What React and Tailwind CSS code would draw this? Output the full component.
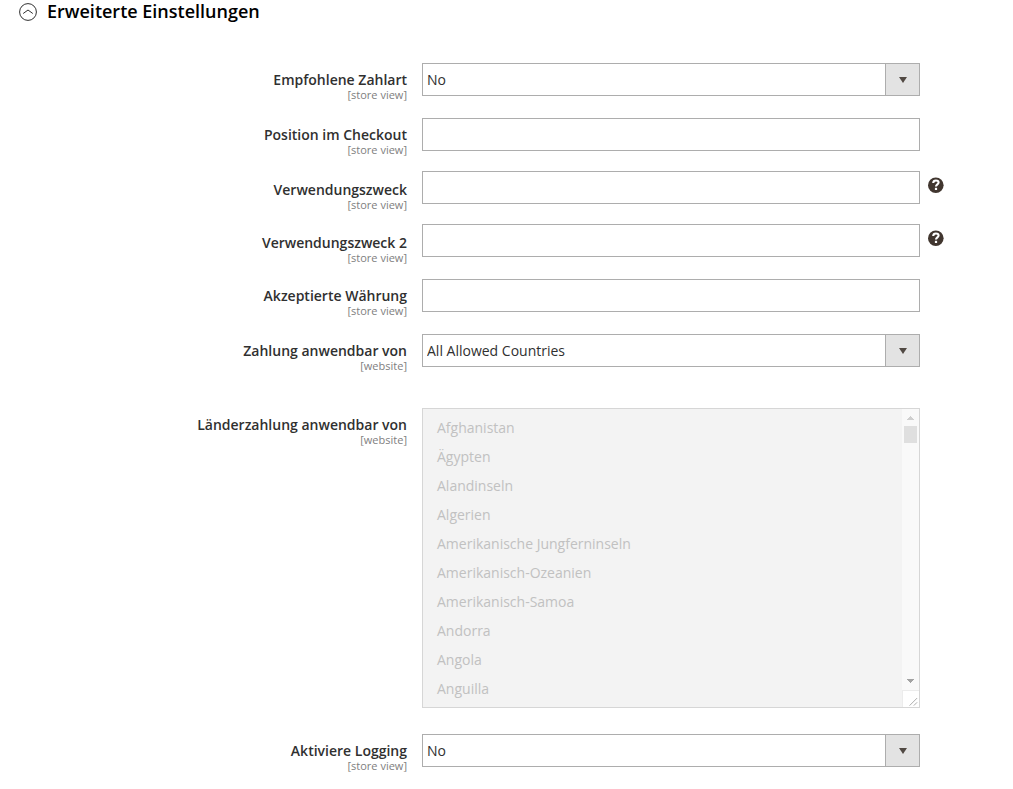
const countries = [
  'Afghanistan',
  'Ägypten',
  'Alandinseln',
  'Algerien',
  'Amerikanische Jungferninseln',
  'Amerikanisch-Ozeanien',
  'Amerikanisch-Samoa',
  'Andorra',
  'Angola',
  'Anguilla',
];

const Row = ({ id, label, scope, help, className = '', children }) => (
  <div className={`grid grid-cols-[422fr_498fr_93fr] items-start ${className}`}>
    <label htmlFor={id} className={`block pr-[15px] text-right ${help ? 'pt-2' : 'pt-1.5'}`}>
      <span className="block text-sm leading-[22px] font-semibold text-[#303030]">{label}</span>
      <span className="block text-[11px] leading-2 text-[#808080]">[{scope}]</span>
    </label>
    {children}
    {help && (
      <button type="button" aria-label="Hilfe" className="ml-2 mt-1.5 size-4">
        <svg viewBox="0 0 16 16" className="size-4">
          <circle cx="7.8" cy="8.2" r="7.8" fill="#41362f" />
          <path d="M5.2 6C5.3 4.2 6.4 3.5 7.9 3.5c1.6 0 2.7.8 2.7 2.1 0 1.8-2.6 1.9-2.6 4" fill="none" stroke="#fff" strokeWidth="2.1" />
          <rect x="6.9" y="10.8" width="2.2" height="2.2" fill="#fff" />
        </svg>
      </button>
    )}
  </div>
);

const TextField = ({ id }) => (
  <input id={id} type="text" className="h-[33px] w-full border border-[#adadad] bg-white px-2 text-sm text-[#303030]" />
);

const SelectField = ({ id, options }) => (
  <div className="relative">
    <select
      id={id}
      className="block h-[33px] w-full appearance-none border border-[#adadad] bg-white pl-1 pr-10 text-sm text-[#303030]"
    >
      {options.map((option) => (
        <option key={option}>{option}</option>
      ))}
    </select>
    <span className="pointer-events-none absolute inset-y-0 right-0 flex w-[35px] items-center justify-center border border-[#adadad] bg-[#e3e3e3]">
      <svg viewBox="0 0 8 6" className="h-1.5 w-2">
        <path d="M0 0h8L4 6z" fill="#514943" />
      </svg>
    </span>
  </div>
);

const CountryList = ({ id }) => (
  <div className="flex h-[300px] border border-[#d6d6d6] bg-[#f3f3f3]">
    <select
      id={id}
      multiple
      disabled
      className="h-full min-w-0 flex-1 appearance-none overflow-hidden bg-[#f3f3f3] pt-[5px] text-sm opacity-100"
    >
      {countries.map((country) => (
        <option key={country} className="h-[29px] px-3.5 py-1 leading-[21px] text-[#c1c1c1]">
          {country}
        </option>
      ))}
    </select>
    <div aria-hidden="true" className="flex w-[17px] flex-col items-center bg-[#f9f9f9]">
      <svg viewBox="0 0 7 4" className="mt-[7px] h-1 w-[7px]" shapeRendering="crispEdges">
        <path d="M0 4h7V3H6V2H5V1H4V0H3v1H2v1H1v1H0z" fill="#cfcfcf" />
      </svg>
      <div className="mt-1.5 h-[17px] w-[13px] bg-[#dfdfdf]" />
      <svg viewBox="0 0 7 4" className="mt-auto mb-[7px] h-1 w-[7px]" shapeRendering="crispEdges">
        <path d="M0 0h7v1H6v1H5v1H4v1H3V3H2V2H1V1H0z" fill="#a3a3a3" />
      </svg>
      <svg viewBox="0 0 17 17" className="size-[17px] border-l border-t border-[#ececec] bg-white">
        <path d="M7 15.5l8-8M11.5 15.5l3.5-3.5" stroke="#a8a8a8" />
      </svg>
    </div>
  </div>
);

const App = () => (
  <main className="bg-white pb-4 font-['Open_Sans',sans-serif]">
    <h2>
      <button type="button" className="flex h-6 items-center gap-2.5 pl-[19px] text-lg leading-none font-semibold text-black">
        <svg viewBox="0 0 18 18" className="size-[18px]" fill="none" stroke="#303030">
          <circle cx="9" cy="9" r="8.4" />
          <path d="M4.2 10.5L9 7l4.8 3.5" />
        </svg>
        <span className="pb-0.5">Erweiterte Einstellungen</span>
      </button>
    </h2>
    <form className="mt-[39px]">
      <Row id="recommended" label="Empfohlene Zahlart" scope="store view" className="mb-[19px]">
        <SelectField id="recommended" options={['No', 'Yes']} />
      </Row>
      <Row id="position" label="Position im Checkout" scope="store view" className="mb-[17px]">
        <TextField id="position" />
      </Row>
      <Row id="purpose" label="Verwendungszweck" scope="store view" help className="mb-[15px]">
        <TextField id="purpose" />
      </Row>
      <Row id="purpose2" label="Verwendungszweck 2" scope="store view" help className="mb-[17px]">
        <TextField id="purpose2" />
      </Row>
      <Row id="currency" label="Akzeptierte Währung" scope="store view" className="mb-[19px]">
        <TextField id="currency" />
      </Row>
      <Row id="applicable" label="Zahlung anwendbar von" scope="website" className="mb-[38px]">
        <SelectField id="applicable" options={['All Allowed Countries', 'Specific Countries']} />
      </Row>
      <Row id="countries" label="Länderzahlung anwendbar von" scope="website" className="mb-[26px]">
        <CountryList id="countries" />
      </Row>
      <Row id="logging" label="Aktiviere Logging" scope="store view">
        <SelectField id="logging" options={['No', 'Yes']} />
      </Row>
    </form>
  </main>
);

export default App;
